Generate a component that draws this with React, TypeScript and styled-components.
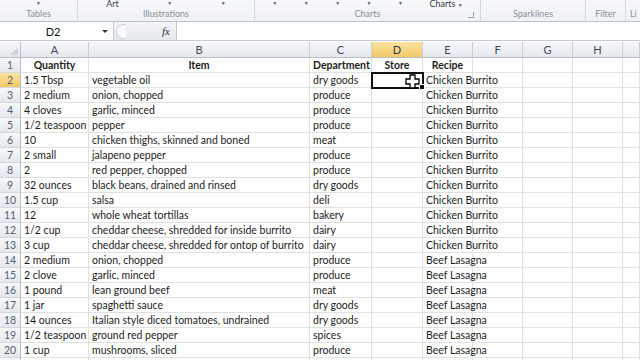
import styled, { createGlobalStyle, css } from "styled-components";

const GlobalStyle = createGlobalStyle`
  html, body {
    margin: 0;
    padding: 0;
    background: #ffffff;
  }
  body {
    width: 640px;
    height: 360px;
    overflow: hidden;
    font-family: Lato, "Liberation Sans", sans-serif;
  }
`;

const COLS = "21px 68px 221px 62px 51px 50px 50px 50px 50px 1fr";

const Page = styled.div`
  width: 640px;
  height: 360px;
  overflow: hidden;
  display: flex;
  flex-direction: column;
  position: relative;
  & > * {
    flex-shrink: 0;
  }
`;

const Ribbon = styled.div`
  height: 21px;
  display: flex;
  background: linear-gradient(#f7f9fc, #eef1f5);
  border-bottom: 1px solid #b9c2cd;
`;

const Group = styled.div<{ $w: number }>`
  width: ${(p) => p.$w}px;
  flex-shrink: 0;
  border-right: 1px solid #d5dbe3;
  display: flex;
  flex-direction: column;
  justify-content: space-between;
  position: relative;
  padding: 0 4px;
  box-sizing: border-box;
`;

const TopControls = styled.div`
  height: 8px;
  display: flex;
  justify-content: space-around;
  align-items: flex-start;
  font-size: 9px;
  line-height: 8px;
  color: #3c3c3c;
  overflow: hidden;
`;

const Arrow = styled.span`
  font-size: 5px;
  line-height: 6px;
  color: #555;
`;

const GroupLabel = styled.div`
  font-size: 9px;
  line-height: 12px;
  color: #8b8f96;
  text-align: center;
  padding-bottom: 1px;
`;

const Launcher = styled.span`
  position: absolute;
  right: 6px;
  bottom: 3px;
  width: 5px;
  height: 5px;
  border: 1px solid #9aa3ad;
  border-top: none;
  border-left: none;
`;

const FormulaBar = styled.div`
  height: 18px;
  display: flex;
  background: #ffffff;
  border-bottom: 1px solid #c5cbd3;
  margin-bottom: 1px;
`;

const NameBox = styled.div`
  width: 113px;
  display: flex;
  align-items: center;
  border-right: 1px solid #c5cbd3;
  font-size: 11px;
  color: #111;
`;

const NameText = styled.span`
  flex: 1;
  text-align: center;
  padding-left: 4px;
`;

const NameArrow = styled.span`
  width: 0;
  height: 0;
  border-left: 3px solid transparent;
  border-right: 3px solid transparent;
  border-top: 3px solid #333;
  margin-right: 5px;
`;

const FxArea = styled.div`
  width: 63px;
  display: flex;
  align-items: center;
  justify-content: space-between;
  background: linear-gradient(#f3f5f7, #e5e9ee);
  border-right: 1px solid #c5cbd3;
  padding: 0 6px 0 2px;
  box-sizing: border-box;
`;

const Grip = styled.span`
  width: 9px;
  height: 13px;
  border-radius: 7px 0 0 7px;
  border: 1px solid #cdd2d8;
  border-right: none;
  background: #f8f9fa;
`;

const Fx = styled.span`
  font-family: "Liberation Serif", serif;
  font-style: italic;
  font-size: 11px;
  color: #333;
`;

const FormulaInput = styled.div`
  flex: 1;
`;

const Sheet = styled.div`
  display: flex;
  flex-direction: column;
`;

const Row = styled.div<{ $h: number }>`
  display: grid;
  grid-template-columns: ${COLS};
  height: ${(p) => p.$h}px;
  flex-shrink: 0;
`;

const headerFill = css`
  background: linear-gradient(#f6f8fa, #e4e8ed);
`;
const activeFill = css`
  background: linear-gradient(#fbe3a2, #f3c866);
`;

const ColHead = styled.div<{ $active?: boolean }>`
  ${(p) => (p.$active ? activeFill : headerFill)};
  border-right: 1px solid #c8ced6;
  border-bottom: 1px solid #b7bec8;
  font-size: 11px;
  color: ${(p) => (p.$active ? "#2f3a48" : "#3f4a58")};
  display: flex;
  align-items: center;
  justify-content: center;
  box-sizing: border-box;
`;

const Corner = styled.div`
  ${headerFill};
  border-right: 1px solid #b7bec8;
  border-bottom: 1px solid #b7bec8;
  box-sizing: border-box;
  position: relative;
  &::after {
    content: "";
    position: absolute;
    right: 2px;
    bottom: 2px;
    border-left: 8px solid transparent;
    border-bottom: 8px solid #cfd5dc;
  }
`;

const RowHead = styled.div<{ $active?: boolean }>`
  ${(p) => (p.$active ? activeFill : headerFill)};
  border-right: 1px solid #b7bec8;
  border-bottom: 1px solid #d3d8de;
  font-size: 10.5px;
  color: #566070;
  display: flex;
  align-items: center;
  justify-content: center;
  box-sizing: border-box;
`;

const Cell = styled.div<{ $bold?: boolean; $center?: boolean; $selected?: boolean }>`
  border-right: 1px solid #dfe1e2;
  border-bottom: 1px solid #dfe1e2;
  box-sizing: border-box;
  font-size: 10.5px;
  color: #1c1c1c;
  font-weight: ${(p) => (p.$bold ? 700 : 400)};
  text-align: ${(p) => (p.$center ? "center" : "left")};
  padding: 0 3px;
  line-height: 14px;
  white-space: nowrap;
  position: relative;
  ${(p) =>
    p.$selected &&
    css`
      outline: 2px solid #111;
      outline-offset: -1px;
      z-index: 2;
      &::after {
        content: "";
        position: absolute;
        right: -3px;
        bottom: -3px;
        width: 4px;
        height: 4px;
        background: #111;
        border: 1px solid #fff;
      }
    `}
`;

const Cursor = styled.svg`
  position: absolute;
  left: 405px;
  top: 74px;
  z-index: 5;
`;

const data: [string, string, string, string][] = [
  ["1.5 Tbsp", "vegetable oil", "dry goods", "Chicken Burrito"],
  ["2 medium", "onion, chopped", "produce", "Chicken Burrito"],
  ["4 cloves", "garlic, minced", "produce", "Chicken Burrito"],
  ["1/2 teaspoon", "pepper", "produce", "Chicken Burrito"],
  ["10", "chicken thighs, skinned and boned", "meat", "Chicken Burrito"],
  ["2 small", "jalapeno pepper", "produce", "Chicken Burrito"],
  ["2", "red pepper, chopped", "produce", "Chicken Burrito"],
  ["32 ounces", "black beans, drained and rinsed", "dry goods", "Chicken Burrito"],
  ["1.5 cup", "salsa", "deli", "Chicken Burrito"],
  ["12", "whole wheat tortillas", "bakery", "Chicken Burrito"],
  ["1/2 cup", "cheddar cheese, shredded for inside burrito", "dairy", "Chicken Burrito"],
  ["3 cup", "cheddar cheese, shredded for ontop of burrito", "dairy", "Chicken Burrito"],
  ["2 medium", "onion, chopped", "produce", "Beef Lasagna"],
  ["2 clove", "garlic, minced", "produce", "Beef Lasagna"],
  ["1 pound", "lean ground beef", "meat", "Beef Lasagna"],
  ["1 jar", "spaghetti sauce", "dry goods", "Beef Lasagna"],
  ["14 ounces", "Italian style diced tomatoes, undrained", "dry goods", "Beef Lasagna"],
  ["1/2 teaspoon", "ground red pepper", "spices", "Beef Lasagna"],
  ["1 cup", "mushrooms, sliced", "produce", "Beef Lasagna"],
  ["", "", "", ""],
];

const letters = ["A", "B", "C", "D", "E", "F", "G", "H", ""];

export default function App() {
  return (
    <Page>
      <GlobalStyle />
      <Ribbon>
        <Group $w={78}>
          <TopControls>
            <Arrow>▼</Arrow>
          </TopControls>
          <GroupLabel>Tables</GroupLabel>
        </Group>
        <Group $w={177}>
          <TopControls>
            <span>Art</span>
            <Arrow>▼</Arrow>
            <Arrow>▼</Arrow>
          </TopControls>
          <GroupLabel>Illustrations</GroupLabel>
        </Group>
        <Group $w={226}>
          <TopControls>
            <Arrow>▼</Arrow>
            <Arrow>▼</Arrow>
            <Arrow>▼</Arrow>
            <Arrow>▼</Arrow>
            <Arrow>▼</Arrow>
            <span>
              Charts <Arrow>▼</Arrow>
            </span>
          </TopControls>
          <GroupLabel>Charts</GroupLabel>
          <Launcher />
        </Group>
        <Group $w={105}>
          <TopControls />
          <GroupLabel>Sparklines</GroupLabel>
        </Group>
        <Group $w={40}>
          <TopControls />
          <GroupLabel>Filter</GroupLabel>
        </Group>
        <Group $w={30}>
          <TopControls />
          <GroupLabel style={{ textAlign: "left" }}>Li</GroupLabel>
        </Group>
      </Ribbon>

      <FormulaBar>
        <NameBox>
          <NameText>D2</NameText>
          <NameArrow />
        </NameBox>
        <FxArea>
          <Grip />
          <Fx>fx</Fx>
        </FxArea>
        <FormulaInput />
      </FormulaBar>

      <Sheet>
        <Row $h={16}>
          <Corner />
          {letters.map((l, i) => (
            <ColHead key={i} $active={l === "D"}>
              {l}
            </ColHead>
          ))}
        </Row>
        <Row $h={15}>
          <RowHead>1</RowHead>
          <Cell $bold $center>Quantity</Cell>
          <Cell $bold $center>Item</Cell>
          <Cell $bold $center>Department</Cell>
          <Cell $bold $center>Store</Cell>
          <Cell $bold $center>Recipe</Cell>
          <Cell />
          <Cell />
          <Cell />
          <Cell />
        </Row>
        {data.map((r, i) => (
          <Row $h={15} key={i}>
            <RowHead $active={i === 0}>{i + 2}</RowHead>
            <Cell>{r[0]}</Cell>
            <Cell>{r[1]}</Cell>
            <Cell>{r[2]}</Cell>
            <Cell $selected={i === 0} />
            <Cell>{r[3]}</Cell>
            <Cell />
            <Cell />
            <Cell />
            <Cell />
          </Row>
        ))}
      </Sheet>

      <Cursor width="15" height="15" viewBox="0 0 15 15">
        <path
          d="M5 1h5v4h4v5h-4v4H5v-4H1V5h4z"
          fill="#fff"
          stroke="#000"
          strokeWidth="1.3"
        />
      </Cursor>
    </Page>
  );
}
